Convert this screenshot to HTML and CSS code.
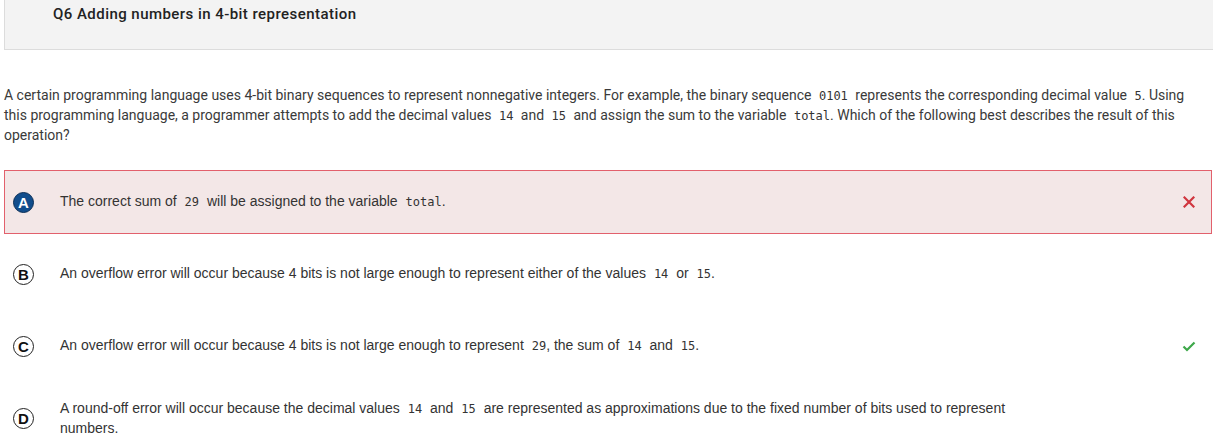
FILE: index.html
```html
<!DOCTYPE html>
<html>
<head>
<meta charset="utf-8">
<link rel="stylesheet" href="styles.css">
</head>
<body>
<div class="page">
  <div class="header">
    <h1 class="title">Q6 Adding numbers in 4-bit representation</h1>
  </div>
  <p class="question">A certain programming language uses 4-bit binary sequences to represent nonnegative integers. For example, the binary sequence <code>0101</code> represents the corresponding decimal value <code class="tight">5</code>.  Using this programming language, a programmer attempts to add the decimal values <code>14</code> and <code>15</code> and assign the sum to the variable <code class="tight">total</code>.  Which of the following best describes the result of this operation?</p>
  <div class="answers">
    <div class="answer wrong">
      <span class="letter filled">A</span>
      <span class="text">The correct sum of <code>29</code> will be assigned to the variable <code class="tight">total</code>.</span>
      <span class="mark">
        <svg width="12" height="12" viewBox="0 0 12 12"><path d="M1.5 1.5 L10.5 10.5 M10.5 1.5 L1.5 10.5" stroke="#d0363f" stroke-width="2.2" stroke-linecap="square"/></svg>
      </span>
    </div>
    <div class="answer">
      <span class="letter">B</span>
      <span class="text">An overflow error will occur because 4 bits is not large enough to represent either of the values <code>14</code> or <code class="tight">15</code>.</span>
      <span class="mark"></span>
    </div>
    <div class="answer">
      <span class="letter">C</span>
      <span class="text">An overflow error will occur because 4 bits is not large enough to represent <code class="tight">29</code>, the sum of <code>14</code> and <code class="tight">15</code>.</span>
      <span class="mark">
        <svg width="14" height="11" viewBox="0 0 14 11"><path d="M1.5 5.5 L5 9 L12.5 1.5" fill="none" stroke="#3ea84a" stroke-width="2.2"/></svg>
      </span>
    </div>
    <div class="answer">
      <span class="letter">D</span>
      <span class="text">A round-off error will occur because the decimal values <code>14</code> and <code>15</code> are represented as approximations due to the fixed number of bits used to represent numbers.</span>
      <span class="mark"></span>
    </div>
  </div>
</div>
</body>
</html>
```
FILE: styles.css
```css
html, body {
  margin: 0;
  padding: 0;
  background: #ffffff;
}
.page {
  padding-left: 4px;
  font-family: Roboto, "Liberation Sans", sans-serif;
  color: #333333;
}
.header {
  height: 50px;
  box-sizing: border-box;
  background: #f3f3f3;
  border-left: 1px solid #dcdcdc;
  border-bottom: 1px solid #dcdcdc;
  padding-left: 48px;
  padding-top: 5px;
  margin-right: -10px;
}
.title {
  margin: 0;
  font-size: 15px;
  font-weight: 500;
  letter-spacing: 0.45px;
  line-height: 18px;
  color: #222222;
}
.question {
  margin: 36px 0 0 0;
  padding-right: 20px;
  font-size: 14px;
  line-height: 19px;
  color: #3a3a3a;
  white-space: pre-line;
}
code {
  font-family: "DejaVu Sans Mono", "Liberation Mono", monospace;
  font-size: 12px;
  padding: 0 4px;
  color: #333333;
}
code.tight {
  padding-right: 0;
}
.answers {
  margin-top: 25px;
  width: 1208px;
  display: flex;
  flex-direction: column;
  gap: 8px;
}
.answer {
  display: flex;
  align-items: center;
  min-height: 64px;
  box-sizing: border-box;
  border: 1px solid transparent;
  padding-left: 8px;
  font-family: "Liberation Sans", Arial, sans-serif;
  font-size: 14px;
  line-height: 19px;
  color: #333333;
}
.answer.wrong {
  background: #f3e7e7;
  border-color: #e2606c;
}
.letter {
  flex: none;
  width: 21px;
  height: 21px;
  box-sizing: border-box;
  border: 1.5px solid #222222;
  border-radius: 50%;
  display: flex;
  align-items: center;
  justify-content: center;
  font-weight: bold;
  font-size: 15px;
  color: #111111;
  margin-top: 1px;
}
.letter.filled {
  background: #114d8c;
  border-color: #0b2f57;
  color: #ffffff;
}
.text {
  flex: 1;
  margin-left: 26px;
  padding-right: 140px;
}
.mark {
  flex: none;
  width: 40px;
  display: flex;
  justify-content: center;
  align-items: center;
  margin-right: 2px;
}
```
